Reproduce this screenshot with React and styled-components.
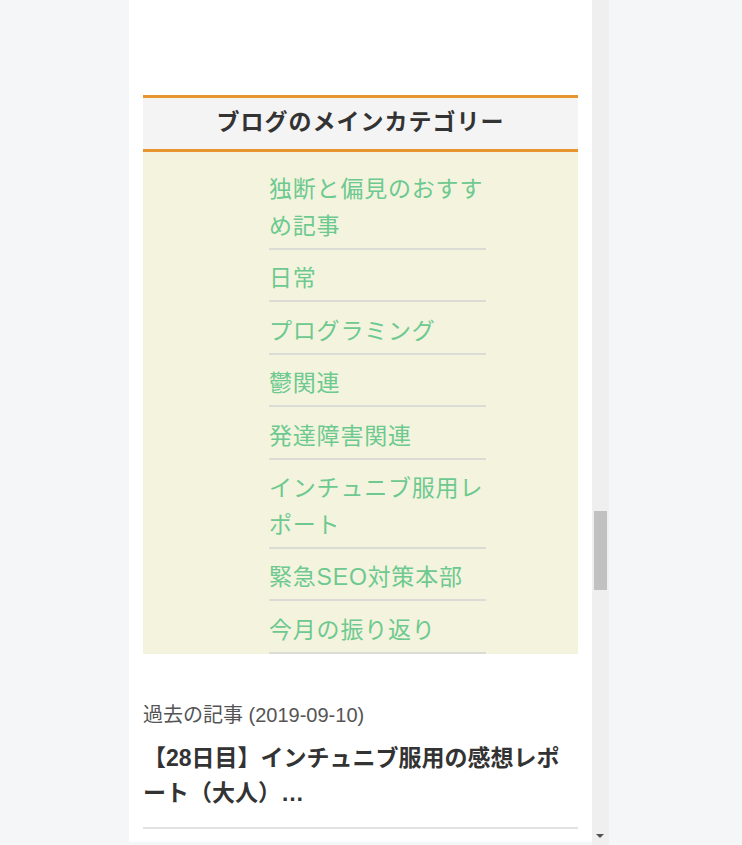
import React from 'react';
import styled, { createGlobalStyle } from 'styled-components';

const GlobalStyle = createGlobalStyle`
  html, body {
    margin: 0;
    padding: 0;
    background: #f5f6f8;
    font-family: "Liberation Sans", "Noto Sans CJK JP", sans-serif;
  }
`;

const Page = styled.div`
  display: flex;
  height: 845px;
  padding-left: 129px;
  overflow: hidden;
`;

const Panel = styled.div`
  width: 463px;
  height: 842px;
  background: #fff;
  padding: 95px 14px 0;
  box-sizing: border-box;
  overflow: hidden;
`;

const ScrollTrack = styled.div`
  position: relative;
  width: 17px;
  height: 845px;
  background: #efefef;
`;

const ScrollThumb = styled.div`
  position: absolute;
  left: 2px;
  right: 2px;
  top: ${props => props.top}px;
  height: ${props => props.size}px;
  background: #c1c1c1;
`;

const ScrollArrow = styled.div`
  position: absolute;
  left: 4px;
  bottom: 7px;
  width: 0;
  height: 0;
  border-left: 4px solid transparent;
  border-right: 4px solid transparent;
  border-top: 4px solid #505050;
`;

const Widget = styled.section`
  background: #f4f4de;
`;

const WidgetTitle = styled.h3`
  margin: 0;
  background: #f4f4f4;
  border-top: 3px solid #e8952f;
  border-bottom: 3px solid #e8952f;
  height: 51px;
  line-height: 48px;
  text-align: center;
  font-size: 23px;
  letter-spacing: 1px;
  font-weight: bold;
  color: #333;
`;

const CategoryList = styled.ul`
  list-style: none;
  margin: 0 0 0 126px;
  padding: 8.5px 0 0;
  width: 217px;
`;

const CategoryItem = styled.li`
  padding: 10.5px 0 3.5px;
  border-bottom: 2px solid #dcdcd6;
  font-size: 23px;
  letter-spacing: 0.8px;
  line-height: 36.5px;
`;

const CategoryLink = styled.a`
  color: #6dc98f;
  text-decoration: none;
`;

const Archive = styled.div`
  padding-top: 47px;
`;

const ArchiveLabel = styled.div`
  font-size: 20px;
  line-height: 28px;
  color: #555;
`;

const ArchiveTitle = styled.a`
  display: block;
  margin-top: 12px;
  padding-bottom: 16px;
  border-bottom: 2px solid #e2e2e2;
  font-size: 23px;
  font-weight: bold;
  line-height: 35px;
  color: #333;
  text-decoration: none;
`;

const categories = [
  '独断と偏見のおすすめ記事',
  '日常',
  'プログラミング',
  '鬱関連',
  '発達障害関連',
  'インチュニブ服用レポート',
  '緊急SEO対策本部',
  '今月の振り返り'
];

export default function App() {
  return (
    <>
      <GlobalStyle />
      <Page>
        <Panel>
          <Widget>
            <WidgetTitle>ブログのメインカテゴリー</WidgetTitle>
            <CategoryList>
              {categories.map(name => (
                <CategoryItem key={name}>
                  <CategoryLink href="#">{name}</CategoryLink>
                </CategoryItem>
              ))}
            </CategoryList>
          </Widget>
          <Archive>
            <ArchiveLabel>過去の記事 (2019-09-10)</ArchiveLabel>
            <ArchiveTitle href="#">【28日目】インチュニブ服用の感想レポート（大人）…</ArchiveTitle>
          </Archive>
        </Panel>
        <ScrollTrack>
          <ScrollThumb top={511} size={79} />
          <ScrollArrow />
        </ScrollTrack>
      </Page>
    </>
  );
}
